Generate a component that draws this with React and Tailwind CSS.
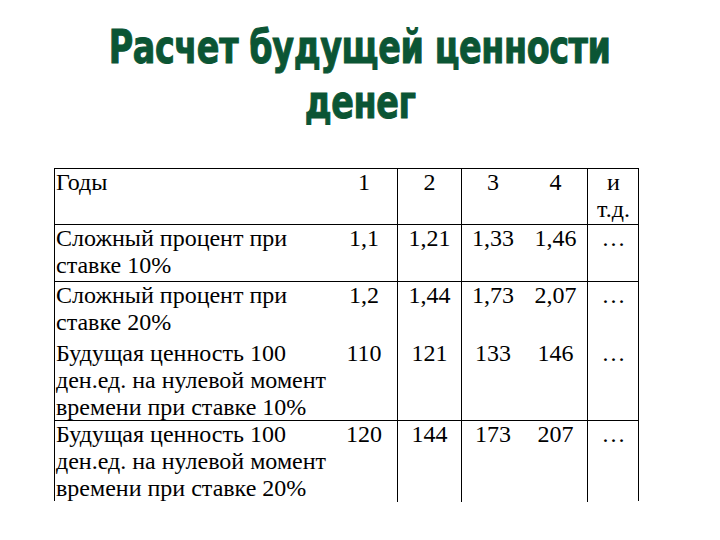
const rows = [
  {
    label: ["Годы", ""],
    cells: ["1", "2", "3", "4", ["и", "т.д."]],
    h: "h-[56px]",
  },
  {
    label: ["Сложный процент при", "ставке 10%"],
    cells: ["1,1", "1,21", "1,33", "1,46", "…"],
    h: "h-[57px]",
  },
  {
    label: ["Сложный процент при", "ставке 20%"],
    cells: ["1,2", "1,44", "1,73", "2,07", "…"],
    h: "h-[58px]",
    noLine: true,
  },
  {
    label: ["Будущая ценность 100", "ден.ед. на нулевой момент", "времени при ставке 10%"],
    cells: ["110", "121", "133", "146", "…"],
    h: "h-[81px]",
  },
  {
    label: ["Будущая ценность 100", "ден.ед. на нулевой момент", "времени при ставке 20%"],
    cells: ["120", "144", "173", "207", "…"],
    h: "h-[80px]",
  },
];

const Cell = ({ children, border }) => (
  <div className={"flex flex-col items-center " + (border ? "border-l border-black" : "")}>
    {children}
  </div>
);

export default function App() {
  return (
    <div className="w-[720px] h-[540px] bg-white overflow-hidden">
      <h1
        className="mt-[19px] flex flex-col items-center font-bold text-[47px] leading-[55px] text-[#0b5534] [-webkit-text-stroke:1px_#0b5534]"
        style={{ fontFamily: '"DejaVu Sans Condensed", "DejaVu Sans", sans-serif' }}
      >
        <span className="inline-block whitespace-nowrap scale-x-[0.79] tracking-[-0.5px]">
          Расчет будущей ценности
        </span>
        <span className="inline-block whitespace-nowrap scale-x-[0.79] tracking-[-0.5px]">денег</span>
      </h1>

      <div
        className="ml-[54px] mt-[39px] w-[585px] border-l border-r border-t border-black text-[24px] leading-[27px] text-black"
        style={{ fontFamily: '"Liberation Serif", "Times New Roman", serif' }}
      >
        {rows.map((r, i) => (
          <div
            key={i}
            className={
              "grid grid-cols-[276px_66px_64px_63px_63px_52px] " +
              r.h +
              (i < rows.length - 1 && !r.noLine ? " border-b border-black" : "")
            }
          >
            <div className="pl-[1px] flex flex-col">
              {r.label.map((l, j) => (
                <span key={j}>{l || "\u00a0"}</span>
              ))}
            </div>
            <Cell>{r.cells[0]}</Cell>
            <Cell border>{r.cells[1]}</Cell>
            <Cell border>{r.cells[2]}</Cell>
            <Cell>{r.cells[3]}</Cell>
            <Cell border>
              {Array.isArray(r.cells[4]) ? (
                r.cells[4].map((t, j) => <span key={j}>{t}</span>)
              ) : (
                <span>{r.cells[4]}</span>
              )}
            </Cell>
          </div>
        ))}
      </div>
    </div>
  );
}
